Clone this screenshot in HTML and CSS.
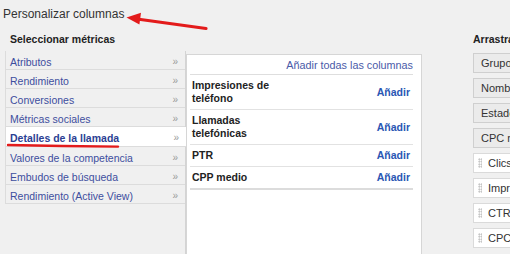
FILE: index.html
```html
<!DOCTYPE html>
<html lang="es">
<head>
<meta charset="utf-8">
<title>Personalizar columnas</title>
<link rel="stylesheet" href="styles.css">
</head>
<body>
<div class="page">
  <h1 class="title">Personalizar columnas</h1>
  <div class="cols">
    <section class="metrics">
      <h2 class="hdr">Seleccionar métricas</h2>
      <div class="picker">
        <ul class="cats">
          <li class="cat">Atributos<span class="chev">»</span></li>
          <li class="cat">Rendimiento<span class="chev">»</span></li>
          <li class="cat">Conversiones<span class="chev">»</span></li>
          <li class="cat">Métricas sociales<span class="chev">»</span></li>
          <li class="cat cat-sel">Detalles de la llamada<span class="chev">»</span></li>
          <li class="cat">Valores de la competencia<span class="chev">»</span></li>
          <li class="cat">Embudos de búsqueda<span class="chev">»</span></li>
          <li class="cat">Rendimiento (Active View)<span class="chev">»</span></li>
        </ul>
        <div class="panel">
          <div class="addall"><a class="addall-link">Añadir todas las columnas</a></div>
          <ul class="mlist">
            <li class="mrow"><span class="mname">Impresiones de<br>teléfono</span><a class="add">Añadir</a></li>
            <li class="mrow"><span class="mname">Llamadas<br>telefónicas</span><a class="add">Añadir</a></li>
            <li class="mrow"><span class="mname">PTR</span><a class="add">Añadir</a></li>
            <li class="mrow mrow-last"><span class="mname">CPP medio</span><a class="add">Añadir</a></li>
          </ul>
        </div>
      </div>
    </section>
    <section class="order">
      <h2 class="hdr hdr-nowrap">Arrastra y suelta para reordenar</h2>
      <ul class="boxes">
        <li class="box box-fixed">Grupo de anuncios</li>
        <li class="box box-fixed">Nombre de la campaña</li>
        <li class="box box-fixed">Estado</li>
        <li class="box box-fixed">CPC máx.</li>
        <li class="box box-drag"><span class="grip"></span>Clics</li>
        <li class="box box-drag"><span class="grip"></span>Impr.</li>
        <li class="box box-drag"><span class="grip"></span>CTR</li>
        <li class="box box-drag"><span class="grip"></span>CPC medio</li>
      </ul>
    </section>
  </div>
  <svg class="marks" width="510" height="254" viewBox="0 0 510 254" aria-hidden="true">
    <line x1="206" y1="28.5" x2="137" y2="19" stroke="#e31b1b" stroke-width="3.2" stroke-linecap="round"/>
    <polygon points="126.5,17.5 141,12.8 139.4,24.6" fill="#e31b1b"/>
    <path d="M8 145 Q62 146.2 118 146.6" fill="none" stroke="#e31b1b" stroke-width="2.4" stroke-linecap="round"/>
  </svg>
</div>
</body>
</html>
```
FILE: styles.css
```css
* { box-sizing: border-box; }
html, body {
  margin: 0;
  padding: 0;
  width: 510px;
  height: 254px;
  overflow: hidden;
  background: #f0f0f0;
  font-family: "Liberation Sans", Arial, sans-serif;
}
.page {
  position: relative;
  width: 510px;
  height: 254px;
  padding-top: 7px;
  overflow: hidden;
}
ul { list-style: none; margin: 0; padding: 0; }
a { cursor: pointer; }

.title {
  margin: 0;
  padding-left: 3px;
  font-size: 12px;
  line-height: 14px;
  font-weight: normal;
  color: #333;
}
.cols {
  display: flex;
  margin: 12px 0 0 5px;
}
.hdr {
  margin: 0;
  padding-left: 5px;
  font-size: 10.5px;
  line-height: 12px;
  font-weight: bold;
  color: #222;
}
.hdr-nowrap { white-space: nowrap; padding-left: 0; }

.picker {
  display: flex;
  align-items: flex-start;
  margin-top: 6px;
  height: 210px;
}
.cats {
  width: 181px;
  height: 100%;
  border-right: 1px solid #d4d4d4;
}
.cat {
  display: flex;
  justify-content: space-between;
  height: 19px;
  padding: 4px 7px 0 4px;
  line-height: 14px;
  font-size: 10.5px;
  color: #3d4e9e;
  border-left: 1px solid #dcdcdc;
  border-bottom: 1px solid #dcdcdc;
  white-space: nowrap;
}
.cat-sel {
  height: 20px;
  background: #fff;
  font-weight: bold;
  color: #2b3f93;
  margin-right: -1px;
}
.chev {
  font-size: 10px;
  color: #9a9a9a;
  font-weight: normal;
}

.panel {
  width: 236px;
  height: 230px;
  margin-top: 3px;
  background: #fff;
  border: 1px solid #d6d6d6;
  padding: 4px 8px 0 3px;
}
.addall {
  text-align: right;
  font-size: 10.8px;
  line-height: 12px;
  padding-bottom: 3px;
  border-bottom: 1px solid #dedede;
}
.addall-link { color: #4a5aa8; }
.mrow {
  display: flex;
  justify-content: space-between;
  align-items: center;
  padding: 4px 3px 4px 2px;
  font-size: 10.5px;
  line-height: 13px;
  border-bottom: 1px solid #e2e2e2;
}
.mrow-last { border-bottom: 2px solid #dcdcdc; }
.mname { font-weight: bold; color: #222; }
.add { font-weight: bold; color: #2a56b4; }

.order {
  margin-left: 51px;
  flex: 0 0 200px;
}
.boxes {
  margin-top: 8px;
  display: flex;
  flex-direction: column;
  gap: 5px;
}
.box {
  display: flex;
  align-items: center;
  height: 20px;
  white-space: nowrap;
  font-size: 11px;
  color: #333;
  border: 1px solid #cfcfcf;
}
.box-fixed {
  background: #ebebeb;
  padding-left: 7px;
}
.box-drag {
  background: #fff;
  border-color: #dadada;
  padding-left: 4px;
}
.grip {
  width: 4px;
  height: 10px;
  margin-right: 6px;
  background-image: radial-gradient(circle, #b5b5b5 0.8px, transparent 0.9px);
  background-size: 2.5px 2.5px;
}

.marks {
  position: absolute;
  left: 0;
  top: 0;
  pointer-events: none;
}
```
